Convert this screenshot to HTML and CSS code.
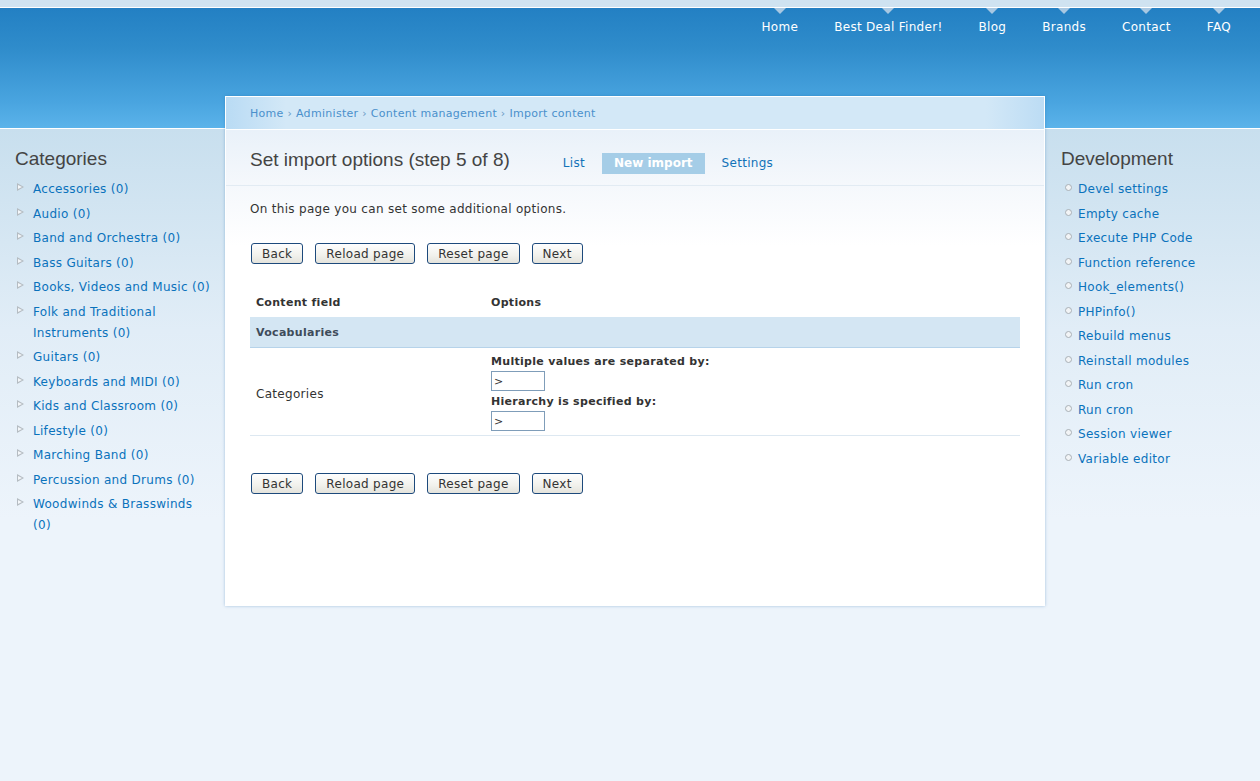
FILE: index.html
```html
<!DOCTYPE html>
<html><head><title>Import content</title>
<link rel="stylesheet" href="styles.css">
</head>
<body>
<div class="top-strip"></div>
<div class="header">
  <ul class="nav">
    <li><a href="#">Home</a></li>
    <li><a href="#">Best Deal Finder!</a></li>
    <li><a href="#">Blog</a></li>
    <li><a href="#">Brands</a></li>
    <li><a href="#">Contact</a></li>
    <li><a href="#">FAQ</a></li>
  </ul>
</div>

<div class="page">
  <div class="sidebar sidebar-left">
    <h2>Categories</h2>
    <ul class="menu menu-tri">
      <li><a href="#">Accessories (0)</a></li>
      <li><a href="#">Audio (0)</a></li>
      <li><a href="#">Band and Orchestra (0)</a></li>
      <li><a href="#">Bass Guitars (0)</a></li>
      <li><a href="#">Books, Videos and Music (0)</a></li>
      <li><a href="#">Folk and Traditional Instruments (0)</a></li>
      <li><a href="#">Guitars (0)</a></li>
      <li><a href="#">Keyboards and MIDI (0)</a></li>
      <li><a href="#">Kids and Classroom (0)</a></li>
      <li><a href="#">Lifestyle (0)</a></li>
      <li><a href="#">Marching Band (0)</a></li>
      <li><a href="#">Percussion and Drums (0)</a></li>
      <li><a href="#">Woodwinds &amp; Brasswinds (0)</a></li>
    </ul>
  </div>

  <div class="main">
    <div class="breadcrumb">
      <a href="#">Home</a> &rsaquo; <a href="#">Administer</a> &rsaquo; <a href="#">Content management</a> &rsaquo; <a href="#">Import content</a>
    </div>
    <div class="title-bar">
      <h1>Set import options (step 5 of 8)</h1>
      <ul class="tabs">
        <li><a href="#">List</a></li>
        <li class="active"><a href="#">New import</a></li>
        <li><a href="#">Settings</a></li>
      </ul>
    </div>
    <div class="content">
      <p class="intro">On this page you can set some additional options.</p>

      <div class="buttons">
        <button>Back</button>
        <button>Reload page</button>
        <button>Reset page</button>
        <button>Next</button>
      </div>

      <table class="fields">
        <thead>
          <tr><th class="col-field">Content field</th><th>Options</th></tr>
        </thead>
        <tbody>
          <tr class="group"><td colspan="2">Vocabularies</td></tr>
          <tr class="row">
            <td>Categories</td>
            <td>
              <label>Multiple values are separated by:</label>
              <input type="text" value="&gt;">
              <label>Hierarchy is specified by:</label>
              <input type="text" value="&gt;">
            </td>
          </tr>
        </tbody>
      </table>

      <div class="buttons buttons-bottom">
        <button>Back</button>
        <button>Reload page</button>
        <button>Reset page</button>
        <button>Next</button>
      </div>
    </div>
  </div>

  <div class="sidebar sidebar-right">
    <h2>Development</h2>
    <ul class="menu menu-dot">
      <li><a href="#">Devel settings</a></li>
      <li><a href="#">Empty cache</a></li>
      <li><a href="#">Execute PHP Code</a></li>
      <li><a href="#">Function reference</a></li>
      <li><a href="#">Hook_elements()</a></li>
      <li><a href="#">PHPinfo()</a></li>
      <li><a href="#">Rebuild menus</a></li>
      <li><a href="#">Reinstall modules</a></li>
      <li><a href="#">Run cron</a></li>
      <li><a href="#">Run cron</a></li>
      <li><a href="#">Session viewer</a></li>
      <li><a href="#">Variable editor</a></li>
    </ul>
  </div>
</div>
</body>
</html>
```

FILE: styles.css
```css
html, body {
  margin: 0;
  padding: 0;
}

body {
  font-family: "DejaVu Sans", Verdana, sans-serif;
  font-size: 12px;
  letter-spacing: 0.3px;
  color: #333;
  min-height: 781px;
  background: #edf4fb linear-gradient(to bottom, #cfe3f1 0, #cfe3f1 129px, #c8dfee 129px, #e1edf7 330px, #edf4fb 520px, #edf4fb 100%) no-repeat;
}

a {
  color: #0a72bc;
  text-decoration: none;
}

ul {
  list-style: none;
  margin: 0;
  padding: 0;
}

/* header */

.top-strip {
  height: 7px;
  background: #cfe3f1;
}

.header {
  height: 120px;
  border-top: 1px solid #fff;
  border-bottom: 1px solid #fff;
  background: linear-gradient(to bottom, #2380c3 0, #2f8ccb 40px, #4aa5e0 95px, #5bb3ea 120px);
}

.nav {
  display: flex;
  justify-content: flex-end;
  padding-right: 11px;
}

.nav li {
  position: relative;
  padding: 12px 18px 0;
}

.nav li:before {
  content: "";
  position: absolute;
  top: 0;
  left: 50%;
  margin-left: -6px;
  border-left: 6px solid transparent;
  border-right: 6px solid transparent;
  border-top: 6px solid #a8c8e2;
}

.nav a {
  color: #fff;
  font-size: 12px;
  line-height: 14px;
}

/* columns */

.page {
  display: flex;
  align-items: flex-start;
}

.sidebar h2 {
  font-family: "Liberation Sans", Arial, sans-serif;
  font-weight: normal;
  font-size: 19px;
  letter-spacing: 0;
  line-height: 22px;
  color: #444;
  margin: 19px 0 8px;
}

.sidebar-left {
  width: 196px;
  padding: 0 14px 0 15px;
}

.sidebar-right {
  width: 184px;
  padding: 0 15px 0 16px;
}

.menu li {
  position: relative;
  line-height: 21px;
  padding: 1px 0 2.5px;
}

.menu-tri li {
  padding-left: 18px;
}

.menu-tri li:before {
  content: "";
  position: absolute;
  left: 2px;
  top: 5px;
  width: 0;
  height: 0;
  border-top: 4px solid transparent;
  border-bottom: 4px solid transparent;
  border-left: 7px solid #b5bcc2;
}

.menu-tri li:after {
  content: "";
  position: absolute;
  left: 3px;
  top: 7px;
  width: 0;
  height: 0;
  border-top: 2px solid transparent;
  border-bottom: 2px solid transparent;
  border-left: 4px solid #f4f7fa;
}

.menu-dot li {
  padding-left: 17px;
}

.menu-dot li:before {
  content: "";
  position: absolute;
  left: 4px;
  top: 6px;
  width: 5px;
  height: 5px;
  border: 1px solid #a9b0b6;
  border-radius: 50%;
  background: #f2f4f6;
}

/* main box */

.main {
  width: 818px;
  min-height: 509px;
  margin-top: -33px;
  background: #fff;
  border: 1px solid #fff;
  border-bottom: 0;
  box-shadow: 0 0 3px rgba(30, 100, 170, 0.35);
}

.breadcrumb {
  height: 32px;
  line-height: 34px;
  padding-left: 24px;
  font-size: 11px;
  color: #6a9cc6;
  background: linear-gradient(to right, #b9dbf4 0, #d3e8f7 60px, #d3e8f7 760px, #bcdcf4 818px);
  border-bottom: 1px solid #fff;
}

.breadcrumb a {
  color: #4a90cc;
}

.title-bar {
  display: flex;
  align-items: center;
  height: 56px;
  padding: 6px 24px 0;
  box-sizing: border-box;
  border-bottom: 1px solid #e2ebf3;
  background: linear-gradient(to bottom, #e9f1f9, #f5f8fc);
}

.title-bar h1 {
  font-family: "Liberation Sans", Arial, sans-serif;
  font-weight: normal;
  font-size: 19px;
  letter-spacing: 0;
  color: #444;
  margin: 0 41px 2px 0;
}

.tabs {
  display: flex;
  gap: 5px;
  margin-top: 5px;
}

.tabs li a {
  display: block;
  padding: 0 12px;
  height: 21px;
  line-height: 21px;
  font-size: 12px;
  color: #1272b8;
}

.tabs li.active a {
  background: #a5cde7;
  color: #fff;
  font-weight: bold;
  letter-spacing: 0;
}

.content {
  padding: 14px 24px 40px;
  background: linear-gradient(to bottom, #f5f8fc, #fff 60px);
}

.intro {
  margin: 0 0 25px;
  line-height: 18px;
}

.buttons {
  display: flex;
  gap: 12px;
  margin-left: 1px;
}

.buttons button {
  height: 21px;
  padding: 0 10px;
  font-family: "DejaVu Sans", Verdana, sans-serif;
  font-size: 12px;
  letter-spacing: 0.3px;
  color: #333;
  border: 1px solid #1d4a7c;
  border-radius: 3px;
  background: linear-gradient(to bottom, #fefefe, #f1f1ec 60%, #e4e3dc);
}

.buttons-bottom {
  margin-top: 37px;
}

.fields {
  width: 770px;
  margin-top: 25px;
  border-collapse: collapse;
}

.fields th {
  text-align: left;
  font-size: 11px;
  font-weight: bold;
  color: #333;
  padding: 5px 6px 6px;
  line-height: 17px;
}

.fields .col-field {
  width: 223px;
}

.fields .group td {
  background: #d4e6f3;
  border-bottom: 1px solid #b6d3ea;
  font-size: 11px;
  font-weight: bold;
  color: #3e4b5a;
  height: 30px;
  padding: 0 6px;
}

.fields .row td {
  border-bottom: 1px solid #dde8f1;
  padding: 6px 6px 1px;
  vertical-align: middle;
}

.fields label {
  display: block;
  font-size: 11px;
  font-weight: bold;
  color: #333;
  line-height: 16px;
}

.fields input {
  display: block;
  box-sizing: border-box;
  width: 54px;
  height: 20px;
  margin: 1px 0 3px;
  padding: 0 2px;
  border: 1px solid #7f9db9;
  font-family: "DejaVu Sans", Verdana, sans-serif;
  font-size: 11px;
  color: #333;
}
```
